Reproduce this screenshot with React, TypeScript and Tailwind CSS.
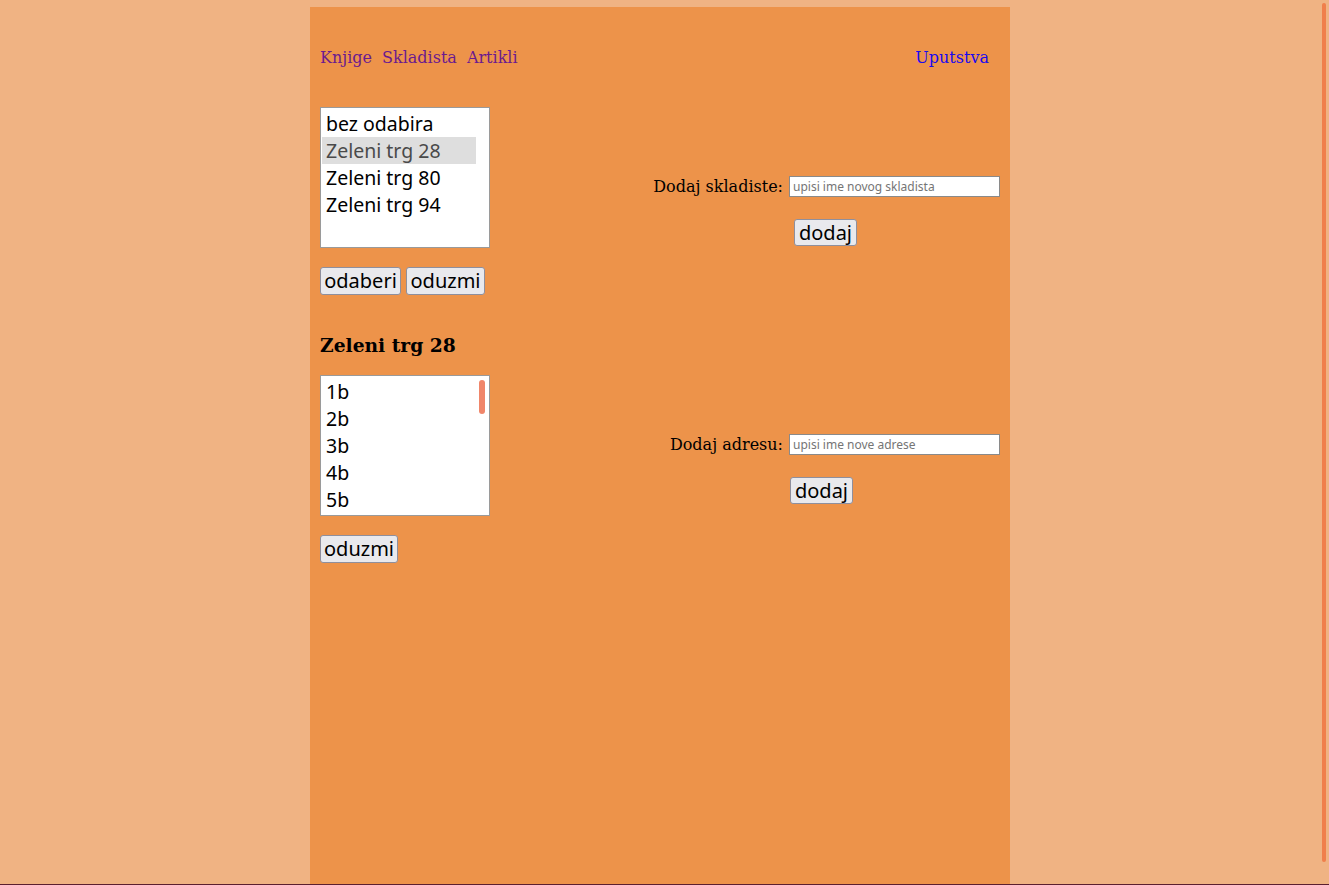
import React from "react";

const sans = "font-['Noto_Sans','Open_Sans',sans-serif]";
const serif = "font-['DejaVu_Serif','Liberation_Serif',serif]";

function Btn({ children, w, h = "h-[28px]" }: { children: React.ReactNode; w: string; h?: string }) {
  return (
    <button
      className={`${sans} ${w} ${h} text-[20px] leading-[26px] text-black bg-[#E9E9ED] border border-[#8F8F9D] rounded-[3px] flex items-center justify-center`}
    >
      {children}
    </button>
  );
}

function ListBox({
  items,
  selected,
  thumb,
}: {
  items: string[];
  selected?: number;
  thumb?: boolean;
}) {
  return (
    <div className="relative w-[170px] h-[141px] bg-white border border-[#9a9a9a] pt-[2px] pl-[1px] overflow-hidden">
      {items.map((it, i) => (
        <div
          key={it}
          className={`${sans} w-[154px] h-[27px] leading-[27px] text-[19.5px] pl-[4px] whitespace-nowrap ${
            i === selected ? "bg-[#DEDEDE] text-[#4a4a4a]" : "text-black"
          }`}
        >
          {it}
        </div>
      ))}
      {thumb && (
        <div className="absolute left-[158px] top-[4px] w-[6px] h-[34px] rounded-full bg-[#F0866A]" />
      )}
    </div>
  );
}

function Field({ label, placeholder }: { label: string; placeholder: string }) {
  return (
    <div className="flex items-center gap-[6px] h-[21px]">
      <span className={`${serif} text-[16px] leading-[21px] text-black`}>{label}</span>
      <input
        className={`${sans} w-[211px] h-[21px] bg-white border border-[#8a8a8a] px-[3px] text-[12px] placeholder:text-[#757575] outline-none`}
        placeholder={placeholder}
      />
    </div>
  );
}

export default function App() {
  return (
    <div className="relative min-h-[885px] h-[885px] bg-[#F0B383] overflow-hidden">
      <div className="w-[1320px] flex justify-center pt-[7px]">
        <div className="w-[700px] h-[878px] bg-[#ED934A] px-[10px] pt-[41px]">
          <nav className={`${serif} flex items-center h-[20px] text-[16px] leading-[20px]`}>
            <a className="text-[#6B1A8F]">Knjige</a>
            <a className="text-[#6B1A8F] ml-[10px]">Skladista</a>
            <a className="text-[#6B1A8F] ml-[10px]">Artikli</a>
            <a className="text-[#1A0AEE] ml-auto mr-[11px]">Uputstva</a>
          </nav>
          <div className="flex mt-[39px]">
            <div className="w-[170px] flex flex-col">
              <ListBox
                items={["bez odabira", "Zeleni trg 28", "Zeleni trg 80", "Zeleni trg 94"]}
                selected={1}
              />
              <div className="flex gap-[5px] mt-[19px]">
                <Btn w="w-[81px]">odaberi</Btn>
                <Btn w="w-[79px]">oduzmi</Btn>
              </div>
              <h2 className={`${serif} font-bold text-[18.7px] leading-[22px] mt-[39px] whitespace-nowrap`}>
                Zeleni trg 28
              </h2>
              <div className="mt-[19px]">
                <ListBox items={["1b", "2b", "3b", "4b", "5b"]} thumb />
              </div>
              <div className="mt-[19px]">
                <Btn w="w-[78px]">oduzmi</Btn>
              </div>
            </div>
            <div className="flex-1 flex flex-col items-end">
              <div className="mt-[69px]">
                <Field label="Dodaj skladiste:" placeholder="upisi ime novog skladista" />
              </div>
              <div className="mt-[22px] mr-[143px]">
                <Btn w="w-[63px]" h="h-[27px]">dodaj</Btn>
              </div>
              <div className="mt-[188px]">
                <Field label="Dodaj adresu:" placeholder="upisi ime nove adrese" />
              </div>
              <div className="mt-[22px] mr-[147px]">
                <Btn w="w-[63px]" h="h-[27px]">dodaj</Btn>
              </div>
            </div>
          </div>
        </div>
      </div>
      <div className="absolute right-[3px] top-[3px] w-[4px] h-[859px] rounded-full bg-[#F07F4C]" />
      <div className="absolute left-0 right-0 bottom-0 h-[1px] bg-[#5A1F2F]" />
    </div>
  );
}
